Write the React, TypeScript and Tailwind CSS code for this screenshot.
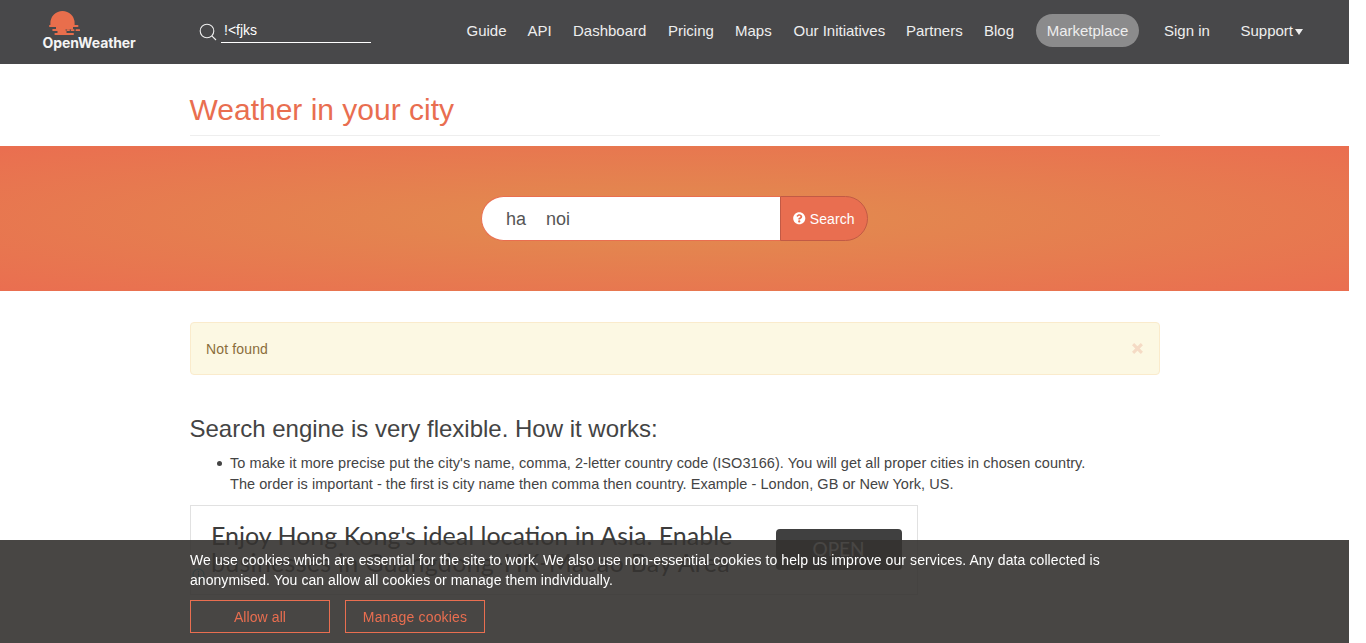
import { FaQuestionCircle } from "react-icons/fa";

const links = [
  { label: "Guide", box: "w-[61px]" },
  { label: "API", box: "w-[45.5px]" },
  { label: "Dashboard", box: "w-[95px]" },
  { label: "Pricing", box: "w-[67px]" },
  { label: "Maps", box: "w-[58.5px]" },
  { label: "Our Initiatives", box: "w-[112.5px]" },
  { label: "Partners", box: "w-[78px]" },
  { label: "Blog", box: "w-[52px]" },
];

function Logo() {
  return (
    <div className="ml-[42px] mt-[10px] w-[100px] text-[#f4f4f4]">
      <svg viewBox="0 0 34 26" className="ml-[5px] block h-[26px] w-[34px]" fill="#e96e4c">
        <path d="M3.4 15.5V13a12.1 12.1 0 0 1 24.2 0v2.5z" />
        <rect x="2" y="15" width="29.5" height="2" rx=".9" />
        <rect x="9" y="16" width="17" height="3.4" />
        <rect x="5.2" y="19" width="13.6" height="2" rx=".9" />
        <rect x="19.6" y="19.2" width="3.2" height="1.8" rx=".5" />
        <rect x="23.8" y="19.2" width="3.6" height="1.8" rx=".5" />
        <rect x="28.6" y="19.2" width="4.4" height="1.8" rx=".5" />
        <rect x="10.5" y="20.5" width="9" height="3.2" />
        <rect x="7.4" y="23" width="19.6" height="2" rx=".9" />
      </svg>
      <div className="-mt-[2px] ml-[0.5px] font-['Inter',sans-serif] text-[14px] leading-[17px] font-bold tracking-[-0.1px]">OpenWeather</div>
    </div>
  );
}

function Header() {
  return (
    <header className="flex h-16 bg-[#48484a] text-[15px] text-[#eeeeee]">
      <Logo />
      <div className="ml-[57px] flex w-[267.5px] pt-[20px]">
        <svg className="mt-[3px] h-[18px] w-[18px]" viewBox="0 0 18 18" fill="none" stroke="#eee" strokeWidth="1.1">
          <circle cx="8" cy="8" r="6.8" />
          <path d="m12.8 12.8 4.2 4.2" />
        </svg>
        <div className="ml-1 h-[23px] w-[150px] border-b border-white text-[14px] leading-[20px] text-white">
          <span className="ml-[3px]">!&lt;fjks</span>
        </div>
      </div>
      <nav className="flex pt-[14px] leading-[33px] whitespace-nowrap">
        {links.map((l) => (
          <a key={l.label} className={l.box}>{l.label}</a>
        ))}
        <a className="h-[33px] w-[103px] rounded-full bg-[#8b8b8c] text-center">Marketplace</a>
        <a className="ml-[25px] w-[76.5px]">Sign in</a>
        <a className="flex">
          Support
          <svg className="mt-[15px] ml-[2px] h-[6px] w-2" viewBox="0 0 8 6" fill="#eee"><path d="M0 0h8L4 6z" /></svg>
        </a>
      </nav>
    </header>
  );
}

function SearchBand() {
  return (
    <section className="mt-[10px] flex h-[145px] justify-center bg-[radial-gradient(ellipse_at_center,#e38a4d_0%,#e3874f_20%,#ea6e50_100%)] pt-[50px]">
      <div className="flex h-[45px]">
        <div className="w-[299px] rounded-l-full border border-r-0 border-[#e96e50] bg-white pl-[24px] text-[18px] leading-[45px] whitespace-pre text-[#555]">{"ha    noi"}</div>
        <button className="flex w-[88px] items-center justify-center gap-1 rounded-r-full border border-[#c25a45] bg-[#e96e50] text-[14px] text-white">
          <FaQuestionCircle size={12.5} />
          <span className="pt-[2px] tracking-[0.1px]">Search</span>
        </button>
      </div>
    </section>
  );
}

function Advert() {
  return (
    <div className="flex h-[90px] w-[728px] border border-[#e1e1e1] font-['Lato',sans-serif] text-[#3c3c3c]">
      <div className="flex w-[20.5px] items-end">
        <svg className="mb-[13px] ml-[1px] h-[13px] w-[13px]" viewBox="0 0 13 13" fill="none" stroke="#00aecd">
          <circle cx="6.5" cy="6.5" r="5.5" />
          <path d="M6.5 5.5v4M6.5 3v1.3" />
        </svg>
      </div>
      <div className="w-[564.5px] pt-[16px] text-[25px] leading-[27px] whitespace-nowrap">
        <div>Enjoy Hong Kong's ideal location in Asia. Enable</div>
        <div className="tracking-[0.28px]">businesses in Guangdong-HK-Macao Bay Area</div>
      </div>
      <div className="mt-[23px] h-[41px] w-[126px] rounded bg-[#404040] text-center text-[19px] leading-[40px] text-white">OPEN</div>
    </div>
  );
}

function CookieBar() {
  return (
    <div className="fixed bottom-0 left-0 h-[103px] w-[1349px] bg-[#343230]/90 pt-[10px] pl-[190px]">
      <p className="text-[14px] leading-5 whitespace-nowrap text-white">
        <span className="tracking-[0.096px]">We use cookies which are essential for the site to work. We also use non-essential cookies to help us improve our services. Any data collected is</span>
        <br />
        <span className="tracking-[0.055px]">anonymised. You can allow all cookies or manage them individually.</span>
      </p>
      <div className="mt-[10px] flex gap-[15px] text-[14px] text-[#e96e50]">
        <button className="h-[33px] w-[140px] border border-[#e96e50] pt-[2px] tracking-[0.08px]">Allow all</button>
        <button className="h-[33px] w-[140px] border border-[#e96e50] pt-[2px] tracking-[0.17px]">Manage cookies</button>
      </div>
    </div>
  );
}

export default function App() {
  return (
    <div className="h-[643px] overflow-hidden bg-white font-['Liberation_Sans',Arial,sans-serif] text-[#444]">
      <div className="w-[1349px]">
        <Header />
        <h1 className="ml-[189.5px] mt-[27px] h-[45px] w-[970px] border-b border-[#eee] text-[30px] leading-[38px] text-[#e96e50]">Weather in your city</h1>
        <SearchBand />
        <main className="ml-[189.5px] w-[970px] pt-[31px]">
          <div className="flex h-[53px] items-center justify-between rounded border border-[#faebcc] bg-[#fcf8e3] pr-[16px] pl-[15.5px] text-[14px] text-[#8a6d3b]">
            <span className="pt-[2px] tracking-[0.15px]">Not found</span>
            <svg className="h-[11px] w-[11px]" viewBox="0 0 10 10" stroke="#f5dbc5" strokeWidth="2.8"><path d="m1 1 8 8M9 1 1 9" /></svg>
          </div>
          <h2 className="mt-[39px] text-[24px] leading-[30px]">Search engine is very flexible. How it works:</h2>
          <ul className="mt-[9px] mb-[10px] pl-[27px] text-[14.5px] leading-[21px] whitespace-nowrap">
            <li className="flex">
              <span className="mt-[8px] mr-[8.5px] h-[5px] w-[5px] rounded-full bg-[#444]" />
              <div>
                <div className="tracking-[0.056px]">To make it more precise put the city's name, comma, 2-letter country code (ISO3166). You will get all proper cities in chosen country.</div>
                <div className="tracking-[0.045px]">The order is important - the first is city name then comma then country. Example - London, GB or New York, US.</div>
              </div>
            </li>
          </ul>
          <Advert />
        </main>
      </div>
      <CookieBar />
    </div>
  );
}
